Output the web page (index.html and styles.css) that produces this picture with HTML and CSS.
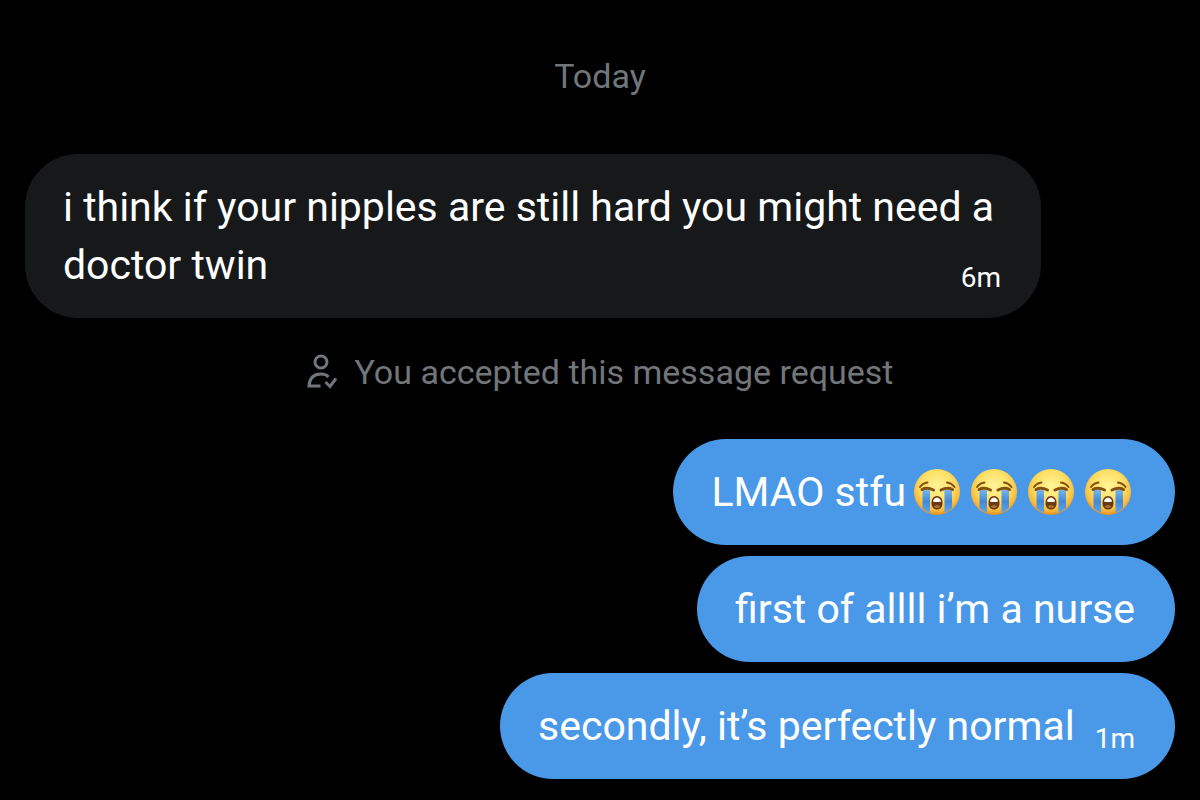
FILE: index.html
```html
<!DOCTYPE html>
<html lang="en">
<head>
    <meta charset="UTF-8">
    <meta name="viewport" content="width=device-width, initial-scale=1.0">
    <title>Messages</title>
    <link rel="stylesheet" href="styles.css">
</head>
<body>
    <!-- Shared emoji drawing -->
    <svg class="defs" width="0" height="0" aria-hidden="true">
        <defs>
            <radialGradient id="face" cx="50%" cy="38%" r="62%">
                <stop offset="0" stop-color="#fff59a"/>
                <stop offset="0.55" stop-color="#fde065"/>
                <stop offset="0.85" stop-color="#f7b83c"/>
                <stop offset="1" stop-color="#e38c1e"/>
            </radialGradient>
            <linearGradient id="tears" x1="0" y1="0" x2="0" y2="1">
                <stop offset="0" stop-color="#76b4ea"/>
                <stop offset="0.5" stop-color="#4289d8"/>
                <stop offset="1" stop-color="#5fa6e8"/>
            </linearGradient>
            <symbol id="sob" viewBox="0 0 46 46">
                <circle cx="23" cy="23" r="23" fill="url(#face)"/>
                <path d="M8.500 21h7.500v23q-4.500-2-7.500-5z" fill="url(#tears)"/>
                <path d="M30.500 21h7.500v18q-3 3-7.500 5z" fill="url(#tears)"/>
                <g fill="none" stroke="#85500f" stroke-linecap="round">
                    <path d="M8 20.500q5-2.500 11.500.5" stroke-width="3"/>
                    <path d="M38.500 20.500q-5-2.500-11.500.5" stroke-width="3"/>
                    <path d="M6 18q3-4 7.500-4.500M40.500 18q-3-4-7.500-4.500" stroke-width="2"/>
                </g>
                <path d="M23 27c3.500 0 5.500 3 5.500 7s-2 6.500-5.500 6.500-5.500-2.500-5.500-6.500 2-7 5.500-7z" fill="#6b3a12"/>
                <path d="M19 31.500q4-6 8 0v1q-4 1-8 0z" fill="#fff"/>
                <path d="M19.500 37.500q3.500-3 7 0-3.500 3-7 0z" fill="#a9702f"/>
            </symbol>
        </defs>
    </svg>

    <main class="chat">
        <h1 class="day">Today</h1>

        <div class="message received">
            i think if your nipples are still hard you might need a doctor twin
            <time class="time">6m</time>
        </div>

        <p class="notice">
            <svg class="notice-icon" viewBox="0 0 32 36" aria-hidden="true">
                <circle cx="14" cy="8" r="6"/>
                <path d="M21.500 23C19.500 20.500 17 20 14 20 7 20 2.500 24 2 32h11.500"/>
                <path d="M18.500 28l4.500 4.500L29 24.500"/>
            </svg>
            You accepted this message request
        </p>

        <div class="message sent">
            LMAO stfu<span class="emojis">
                <svg class="emoji" role="img" aria-label="loudly crying face"><use href="#sob"/></svg>
                <svg class="emoji" role="img" aria-label="loudly crying face"><use href="#sob"/></svg>
                <svg class="emoji" role="img" aria-label="loudly crying face"><use href="#sob"/></svg>
                <svg class="emoji" role="img" aria-label="loudly crying face"><use href="#sob"/></svg>
            </span>
        </div>
        <div class="message sent">first of allll i’m a nurse</div>
        <div class="message sent">
            secondly, it’s perfectly normal
            <time class="time">1m</time>
        </div>
    </main>
</body>
</html>
```

FILE: styles.css
```css
body {
    margin: 0;
    background-color: #000;
    color: #fff;
    font-family: Roboto, "Noto Sans", sans-serif;
}
.defs {
    display: block;
}
.chat {
    display: flex;
    flex-direction: column;
    gap: 11px;
    padding: 52px 25px 20px;
}
.day,
.notice {
    margin: 0;
    color: #71767b;
    font-size: 34px;
    font-weight: 400;
    line-height: 48px;
    text-align: center;
}
.day {
    margin-bottom: 43px;
}
.message {
    box-sizing: border-box;
    max-width: 1016px;
    padding: 24px 40px 24px 38px;
    border-radius: 53px;
    font-size: 41px;
    line-height: 58px;
}
.received {
    align-self: flex-start;
    background-color: #16181a;
}
.sent {
    align-self: flex-end;
    background-color: #4a99e9;
}
.time {
    float: right;
    margin: 26px 0 0 20px;
    font-size: 28px;
    line-height: 32px;
}
.notice {
    display: flex;
    align-items: center;
    justify-content: center;
    gap: 16px;
    margin: 19px 0 32px;
}
.notice-icon {
    width: 32px;
    height: 36px;
    fill: none;
    stroke: #71767b;
    stroke-width: 3;
}
.emojis {
    display: inline-flex;
    gap: 11px;
    margin: 0 4px 0 8px;
    vertical-align: -9px;
}
.emoji {
    width: 46px;
    height: 46px;
}
```
